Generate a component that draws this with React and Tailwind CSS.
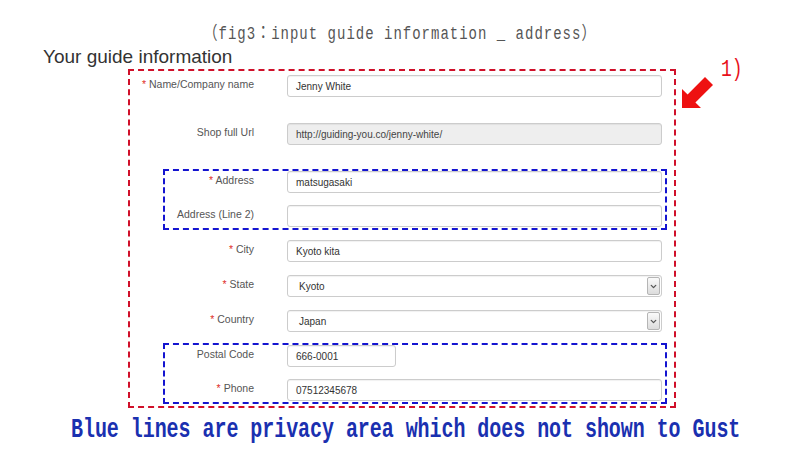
import { ChevronDown } from "lucide-react";

function Label({ req, w, children }) {
  return (
    <div className={`${w} shrink-0 text-right text-[10.5px] leading-[18px] text-[#555]`}>
      {req && <span className="text-[#e0302a]">* </span>}
      {children}
    </div>
  );
}

function Field({ value, w = "w-[375px]", gray }) {
  return (
    <div
      className={`${w} flex h-[22px] items-center rounded-[3px] border border-[#ccc] px-[8px] text-[10px] text-[#333] shadow-[inset_0_1px_1px_rgba(0,0,0,0.06)] ${
        gray ? "bg-[#eee] text-[#444]" : "bg-white"
      }`}
    >
      {value}
    </div>
  );
}

function Select({ value }) {
  return (
    <div className="flex h-[22px] w-[375px] items-center rounded-[3px] border border-[#ccc] bg-white pl-[11px] pr-[1px] text-[10px] text-[#333] shadow-[inset_0_1px_1px_rgba(0,0,0,0.06)]">
      <span className="flex-1">{value}</span>
      <span className="flex h-[18px] w-[13px] items-center justify-center rounded-[2px] border border-[#b5b5b5] bg-gradient-to-b from-[#fafafa] to-[#dcdcdc]">
        <ChevronDown size={9} strokeWidth={3.5} className="text-[#555]" />
      </span>
    </div>
  );
}

function Row({ label, req, lw, className = "", children }) {
  return (
    <div className={`flex items-start gap-[33px] ${className}`}>
      <Label req={req} w={lw}>
        {label}
      </Label>
      {children}
    </div>
  );
}

export default function App() {
  const outer = "w-[124px]";
  const inner = "w-[89px]";

  return (
    <div className="relative h-[450px] w-[800px] overflow-hidden bg-white font-['Liberation_Sans',Arial,sans-serif]">
      <p className="mt-[26px] h-[17px] scale-y-[1.3] text-center font-['Liberation_Mono','Noto_Sans_CJK_JP',monospace] text-[14px] leading-[17px] tracking-[1px] text-[#555]">
        （fig3：input guide information _ address）
      </p>

      <h2 className="ml-[43px] mt-[3px] text-[19px] leading-[22px] text-[#333]">
        Your guide information
      </h2>

      <div className="ml-[128px] mt-[1px] w-[548px] border-2 border-dashed border-[#d0102a] pb-[2px] pt-[4px]">
        <Row label="Name/Company name" req lw={outer}>
          <Field value="Jenny White" />
        </Row>
        <Row label="Shop full Url" lw={outer} className="mt-[26px]">
          <Field value="http://guiding-you.co/jenny-white/" gray />
        </Row>

        <div className="ml-[33px] mt-[24px] w-[504px] border-2 border-dashed border-[#1414d0] pb-[1px] pr-[3px]">
          <Row label="Address" req lw={inner}>
            <Field value="matsugasaki" />
          </Row>
          <Row label="Address (Line 2)" lw={inner} className="mt-[12px]">
            <Field value="" />
          </Row>
        </div>

        <Row label="City" req lw={outer} className="mt-[10px]">
          <Field value="Kyoto kita" />
        </Row>
        <Row label="State" req lw={outer} className="mt-[13px]">
          <Select value="Kyoto" />
        </Row>
        <Row label="Country" req lw={outer} className="mt-[13px]">
          <Select value="Japan" />
        </Row>

        <div className="ml-[33px] mt-[11px] w-[504px] border-2 border-dashed border-[#1414d0] pb-[1px] pr-[3px]">
          <Row label="Postal Code" lw={inner}>
            <Field value="666-0001" w="w-[109px]" />
          </Row>
          <Row label="Phone" req lw={inner} className="mt-[12px]">
            <Field value="07512345678" />
          </Row>
        </div>
      </div>

      <p className="mt-[10px] h-[24px] scale-y-[1.35] pl-[71px] font-['Liberation_Mono',monospace] text-[20px] font-bold leading-[24px] tracking-[-0.05px] text-[#1a30b0]">
        Blue lines are privacy area which does not shown to Gust
      </p>

      <span className="absolute left-[721px] top-[59px] scale-y-[1.3] font-['Liberation_Mono',monospace] text-[18px] leading-[20px] text-[#e8101a]">
        1)
      </span>
      <svg className="absolute left-[678px] top-[72px]" width="40" height="40" viewBox="0 0 40 40">
        <polygon
          points="4,36 4,17 9.6,22.6 27,5 35,13 17.4,30.4 23,36"
          fill="#ee1111"
        />
      </svg>
    </div>
  );
}
